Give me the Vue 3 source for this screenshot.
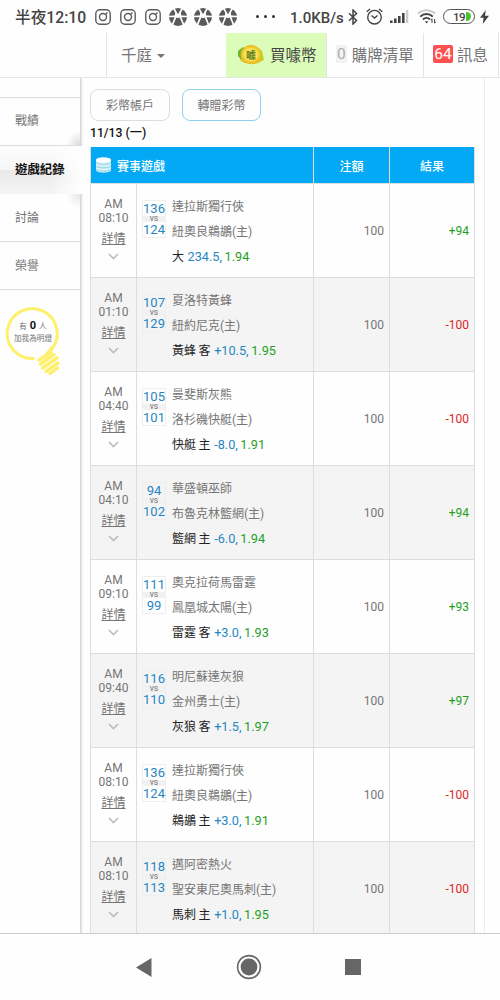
<template>
  <div class="screen">
    <!-- 系統狀態列 -->
    <div class="status">
      <span class="clock">半夜12:10</span>
      <div class="notices">
        <svg v-for="n in 3" :key="'ig' + n" width="16" height="16" viewBox="0 0 16 16" fill="none" stroke="#5c5c5c">
          <rect x="0.8" y="0.8" width="14.4" height="14.4" rx="4" stroke-width="1.4" />
          <circle cx="8" cy="8" r="3.5" stroke-width="1.4" />
          <path d="M10.8 5.2 12.4 3.600" stroke-width="1.4" />
        </svg>
        <svg v-for="n in 3" :key="'ball' + n" class="ball" width="18" height="18" viewBox="0 0 18 18">
          <circle cx="9" cy="9" r="9" fill="#5a5a5a" />
          <path d="M4.500 0 9 8 13.500 0M0 8.500l7-.3L3.300 17M18 8.500l-7-.3L14.700 17" fill="none" stroke="#fff" stroke-width="1.7" />
          <path d="M6.500 4 9 9l2.500-5 1 4.500L9.500 10h-1L5.500 8.500z" fill="#fff" />
          <path d="M7 1h4L9 5z" fill="#5a5a5a" />
        </svg>
      </div>
      <span class="dots"><i></i><i></i><i></i></span>
      <span class="speed">1.0KB/s</span>
      <svg class="bt" width="10" height="16" viewBox="0 0 10 16" fill="none" stroke="#444" stroke-width="1.5">
        <path d="M1 4.2 8.5 11.5 5 15V1L8.5 4.5 1 11.8" />
      </svg>
      <svg class="alarm" width="17" height="17" viewBox="0 0 17 17" fill="none" stroke="#444" stroke-width="1.4">
        <circle cx="8.5" cy="9.2" r="6.8" />
        <path d="M5.5 7.5 8.5 10 11.5 7.5M.7 3.7 4 1M16.3 3.7 13 1" />
      </svg>
      <svg class="signal" width="19" height="14" viewBox="0 0 19 14" fill="#444">
        <path d="M0 10.5h2.6V13H0zM4 8.5h2.6V13H4zM8 6h2.6v7H8zM12 3h2.6v10H12z" />
        <path d="M16 0h2.3v13H16z" fill="#ccc" />
      </svg>
      <svg class="wifi" width="20" height="16" viewBox="0 0 20 16" fill="none" stroke="#444" stroke-width="2">
        <path d="M1 4.8C5.5.2 13.5.2 18 4.8" stroke="#ccc" />
        <path d="M3.2 7.6C6.8 4 12.2 4 15.8 7.6M6 10.5c2-2 5-2 7 0" />
        <path d="M7.8 12.2h3.6L9.6 14.4z" fill="#444" stroke="none" />
        <path d="M15 10v4m-1.2-2.8L15 9.7M17.6 10v4m1.2-1.2-1.2 1.5" stroke-width="1" />
      </svg>
      <span class="battery">19<i></i></span>
      <svg class="bolt" width="9" height="14" viewBox="0 0 9 14" fill="#444">
        <path d="M5.8 0 0 7.8h3.5L2.8 14 9 5.8H5z" />
      </svg>
    </div>

    <!-- 頂部導覽 -->
    <nav class="topnav">
      <div class="nav-blank"></div>
      <div class="nav-user">千庭<i class="caret"></i></div>
      <div class="nav-buy">
        <svg width="28" height="24" viewBox="0 0 28 24">
          <path d="M1 8 6 4 10 8 8 20 5 18 1 13z" fill="#69b92c" />
          <path d="M20 4 25 8 27 17 20 20z" fill="#b8d62b" />
          <path d="M3 17c6 5 16 6 23 0l-3-4-15-1z" fill="#dcc524" />
          <ellipse cx="14" cy="11.5" rx="10" ry="9" fill="#f5c928" stroke="#e8b82a" />
          <ellipse cx="14" cy="11.5" rx="7.5" ry="6.8" fill="#f8e35c" />
          <text x="14" y="15.5" text-anchor="middle" class="coin-text">噱</text>
        </svg>
        <span>買噱幣</span>
      </div>
      <div class="nav-list"><b>0</b>購牌清單</div>
      <div class="nav-msg"><b>64</b>訊息</div>
    </nav>

    <div class="body">
      <!-- 側邊選單 -->
      <aside class="side">
        <div class="side-top"></div>
        <div class="side-item fold-bottom">戰績</div>
        <div class="side-item active">遊戲紀錄</div>
        <div class="side-item fold-top">討論</div>
        <div class="side-item">榮譽</div>
        <div class="lamp">
          <svg width="60" height="72" viewBox="0 0 60 72" fill="none" stroke="#fff06c">
            <path d="M30.5 52.5A25 25 0 1 1 48 44" stroke-width="3" stroke-linecap="round" />
            <path d="M49.5 41 41 51.5" stroke-width="3" />
            <path d="m36 54 12-8M37.5 58 51 48.5M39.5 62 54 52M43 65.5 55 57M47 67.5 54.5 62" stroke-width="3.4" stroke-linecap="round" />
          </svg>
          <div class="lamp-text">
            <p>有 <b>0</b> 人</p>
            <p>加我為明燈</p>
          </div>
        </div>
      </aside>

      <main class="main">
        <div class="actions">
          <button>彩幣帳戶</button>
          <button class="on">轉贈彩幣</button>
        </div>
        <div class="date">11/13 (一)</div>
        <div class="table">
          <div class="row head">
            <div class="cell title">
              <svg width="15" height="16" viewBox="0 0 15 16">
                <path d="M0 3v10c0 3.5 15 3.5 15 0V3z" fill="#d9f0f5" />
                <ellipse cx="7.5" cy="3" rx="7.5" ry="2.7" fill="#fff" />
                <path d="M0 5.5c2 2.5 13 2.5 15 0M0 9c2 2.5 13 2.5 15 0M0 12.3c2 2.5 13 2.5 15 0" fill="none" stroke="#7fcbe8" stroke-width="0.8" />
              </svg>
              賽事遊戲
            </div>
            <div class="cell">注額</div>
            <div class="cell">結果</div>
          </div>
          <div class="row" v-for="(g, i) in games" :key="i">
            <div class="cell time">
              <span>AM</span>
              <span>{{ g.time }}</span>
              <a>詳情</a>
              <svg width="11" height="7" viewBox="0 0 11 7" fill="none" stroke="#bbb" stroke-width="1.6">
                <path d="m1 1 4.5 4.5L10 1" />
              </svg>
            </div>
            <div class="cell game">
              <div class="score">
                <span>{{ g.away }}</span>
                <em>vs</em>
                <span>{{ g.home }}</span>
              </div>
              <div class="teams">
                <p>{{ g.teamA }}</p>
                <p>{{ g.teamB }}(主)</p>
                <p class="bet">{{ g.pick }} <span class="line">{{ g.line }},</span> <span class="odds">{{ g.odds }}</span></p>
              </div>
            </div>
            <div class="cell num">100</div>
            <div class="cell num" :class="g.result > 0 ? 'win' : 'lose'">{{ g.result > 0 ? '+' : '' }}{{ g.result }}</div>
          </div>
        </div>
      </main>
    </div>

    <!-- 系統按鍵 -->
    <footer class="keys">
      <svg width="16" height="19" viewBox="0 0 16 19"><path d="M0 9.5 15.5 0v19z" fill="#666" /></svg>
      <svg width="26" height="26" viewBox="0 0 26 26">
        <circle cx="13" cy="13" r="11.4" fill="none" stroke="#666" stroke-width="1.6" />
        <circle cx="13" cy="13" r="8.4" fill="#666" />
      </svg>
      <svg width="16" height="16" viewBox="0 0 16 16"><rect width="16" height="16" fill="#666" /></svg>
    </footer>
  </div>
</template>

<script setup>
// 當日投注紀錄
const games = [
  { time: '08:10', away: 136, home: 124, teamA: '達拉斯獨行俠', teamB: '紐奧良鵜鶘', pick: '大', line: '234.5', odds: '1.94', result: 94 },
  { time: '01:10', away: 107, home: 129, teamA: '夏洛特黃蜂', teamB: '紐約尼克', pick: '黃蜂 客', line: '+10.5', odds: '1.95', result: -100 },
  { time: '04:40', away: 105, home: 101, teamA: '曼斐斯灰熊', teamB: '洛杉磯快艇', pick: '快艇 主', line: '-8.0', odds: '1.91', result: -100 },
  { time: '04:10', away: 94, home: 102, teamA: '華盛頓巫師', teamB: '布魯克林籃網', pick: '籃網 主', line: '-6.0', odds: '1.94', result: 94 },
  { time: '09:10', away: 111, home: 99, teamA: '奧克拉荷馬雷霆', teamB: '鳳凰城太陽', pick: '雷霆 客', line: '+3.0', odds: '1.93', result: 93 },
  { time: '09:40', away: 116, home: 110, teamA: '明尼蘇達灰狼', teamB: '金州勇士', pick: '灰狼 客', line: '+1.5', odds: '1.97', result: 97 },
  { time: '08:10', away: 136, home: 124, teamA: '達拉斯獨行俠', teamB: '紐奧良鵜鶘', pick: '鵜鶘 主', line: '+3.0', odds: '1.91', result: -100 },
  { time: '08:10', away: 118, home: 113, teamA: '邁阿密熱火', teamB: '聖安東尼奧馬刺', pick: '馬刺 主', line: '+1.0', odds: '1.95', result: -100 }
]
</script>

<style>
body {
  margin: 0;
  background: #fff;
}
</style>

<style scoped>
.screen {
  width: 500px;
  height: 1000px;
  display: flex;
  flex-direction: column;
  overflow: hidden;
  background: #fefefe;
  color: #757575;
  font-family: Roboto, "Noto Sans CJK TC", sans-serif;
  font-size: 12px;
}

.screen * {
  box-sizing: border-box;
}

svg {
  display: block;
  flex: none;
}

p {
  margin: 0;
}

.status {
  height: 33px;
  flex: none;
  display: flex;
  align-items: center;
  padding-left: 15px;
  color: #444;
  white-space: nowrap;
}

.clock {
  width: 80px;
  font-size: 15.7px;
  font-weight: 500;
}

.notices {
  display: flex;
  align-items: center;
  gap: 9px;
}

.notices .ball {
  margin-left: -1px;
}

.notices .ball + .ball {
  margin-left: -2px;
}

.dots {
  display: flex;
  gap: 5px;
  margin-left: 19px;
  width: 34px;
}

.dots i {
  width: 3px;
  height: 3px;
  border-radius: 50%;
  background: #333;
}

.speed {
  width: 58px;
  padding-top: 2px;
  font-size: 15px;
  font-weight: 500;
}

.alarm {
  margin-left: 8px;
}

.signal {
  margin-left: 7px;
}

.wifi {
  margin-left: 8px;
}

.battery {
  display: flex;
  align-items: center;
  gap: 1px;
  width: 32px;
  height: 15px;
  margin-left: 6px;
  padding-left: 9px;
  border: 1.5px solid #555;
  border-radius: 8px;
  font-size: 11.5px;
  font-weight: 500;
  letter-spacing: -0.5px;
}

.battery i {
  width: 5px;
  height: 9px;
  border-radius: 0 5px 5px 0;
  background: #4cc425;
}

.bolt {
  margin-left: 5px;
}

.topnav {
  height: 45px;
  flex: none;
  display: flex;
  border-bottom: 1px solid #e6e6e6;
  font-size: 15.5px;
  white-space: nowrap;
}

.topnav > div {
  display: flex;
  align-items: center;
  padding-bottom: 3px;
  border-right: 1px solid #e4e4e4;
}

.topnav > .nav-blank {
  width: 107px;
}

.topnav > .nav-user {
  width: 119px;
  padding-left: 14px;
  border: 0;
}

.caret {
  margin: 4px 0 0 5px;
  border: 4px solid transparent;
  border-top-color: #757575;
  border-bottom: 0;
}

.topnav > .nav-buy {
  width: 101px;
  padding-left: 11px;
  gap: 5px;
  background: #dcfcb9;
  color: #444;
}

.nav-buy svg {
  margin-top: 3px;
}

.coin-text {
  font-size: 10px;
  font-weight: 700;
  fill: #5f7d1c;
}

.topnav > .nav-list {
  width: 97px;
  padding-left: 9px;
}

.nav-list b {
  padding: 0 1px;
  margin-right: 5px;
  background: #f2f2f2;
  color: #aaa;
  font-weight: 400;
  line-height: 18px;
}

.topnav > .nav-msg {
  width: 75px;
  padding-left: 9px;
}

.nav-msg b {
  width: 20px;
  margin-right: 4px;
  border-radius: 2px;
  background: #ff5050;
  color: #fff;
  font-weight: 400;
  line-height: 18px;
  text-align: center;
}

.body {
  height: 856px;
  flex: none;
  display: flex;
  overflow: hidden;
  border-bottom: 1px solid #ccc;
}

.side {
  width: 81px;
  flex: none;
  border-right: 1px solid #d8d8d8;
  box-shadow: 1px 0 2px rgba(0, 0, 0, 0.12);
}

.side-top {
  height: 20px;
  border-bottom: 1px solid #ddd;
}

.side-item {
  height: 48px;
  padding-left: 15px;
  border-bottom: 1px solid #ddd;
  line-height: 48px;
}

.fold-bottom {
  line-height: 47px;
  background: radial-gradient(circle at 100% 100%, #dcdcdc, rgba(255, 255, 255, 0) 14px);
}

.fold-top {
  background: radial-gradient(circle at 100% 0, #e6e6e6, rgba(255, 255, 255, 0) 14px);
}

/* 目前頁籤往右蓋過分隔線 */
.side-item.active {
  position: relative;
  width: 84px;
  border-bottom: 0;
  background: linear-gradient(90deg, rgba(254, 254, 254, 0) 60%, #fefefe 96%), linear-gradient(#fdfdfd, #f6f6f6 50%, #e9e9e9 51%, #f5f5f5);
  color: #111;
  font-size: 12.4px;
  font-weight: 700;
  line-height: 47px;
}

.lamp {
  position: relative;
  margin: 16px 0 0 3px;
  width: 60px;
}

.lamp-text {
  position: absolute;
  top: 14px;
  left: 2px;
  width: 56px;
  font-size: 7.6px;
  line-height: 12px;
  text-align: center;
  white-space: nowrap;
}

.lamp-text b {
  margin: 0 1px;
  color: #111;
  font-size: 11px;
}

.main {
  width: 404px;
  padding: 11px 0 0 9px;
  border-right: 1px solid #ededed;
}

.actions {
  display: flex;
  gap: 12px;
}

button {
  width: 80px;
  height: 32px;
  padding: 0 0 2px;
  border: 1px solid #ddd;
  border-radius: 8px;
  background: #fefefe;
  color: #757575;
  font: inherit;
}

button.on {
  width: 79px;
  border-color: #8fd0ee;
}

.date {
  height: 26px;
  line-height: 24px;
  color: #111;
  font-size: 12.2px;
  font-weight: 500;
}

.table {
  width: 385px;
  border-left: 1px solid #ddd;
}

.row {
  display: grid;
  grid-template-columns: 46px 177px 76px 85px;
  height: 94px;
}

.row:nth-child(odd) {
  background: #f4f4f4;
}

.row.head {
  grid-template-columns: 223px 76px 85px;
  height: 37px;
  background: #03a9f4;
  color: #fff;
  font-weight: 500;
}

.cell {
  display: flex;
  border-right: 1px solid #ddd;
  border-bottom: 1px solid #ddd;
}

.head .cell {
  align-items: center;
  justify-content: center;
}

.head .title {
  justify-content: flex-start;
  gap: 6px;
  padding-left: 5px;
}

.time {
  flex-direction: column;
  align-items: center;
  padding-top: 13px;
  line-height: 14px;
}

.time a {
  margin: 7px 0 7px;
  text-decoration: underline;
}

.game {
  padding-left: 5px;
}

.score {
  display: flex;
  flex-direction: column;
  width: 24px;
  height: 38px;
  margin-top: 16px;
  border: 1px solid #eee;
  color: #2786c2;
  font-size: 13px;
  line-height: 15px;
  text-align: center;
}

.score em {
  height: 6px;
  background: #f1f1f1;
  color: #757575;
  font-size: 8.5px;
  font-style: normal;
  line-height: 5px;
}

.teams {
  padding: 11px 0 0 6px;
  line-height: 25px;
  white-space: nowrap;
}

.bet {
  color: #222;
  line-height: 24px;
  word-spacing: -0.4px;
}

.line {
  margin-left: 1px;
  color: #2786c2;
  font-size: 12.7px;
}

.odds {
  color: #1ea01e;
  font-size: 12.7px;
}

.num {
  align-items: center;
  justify-content: flex-end;
  padding-right: 5px;
}

.win {
  color: #1ea01e;
}

.lose {
  color: #e02424;
}

.keys {
  flex: 1;
  display: flex;
  align-items: center;
  justify-content: space-between;
  padding: 0 139px 0 136px;
}
</style>
